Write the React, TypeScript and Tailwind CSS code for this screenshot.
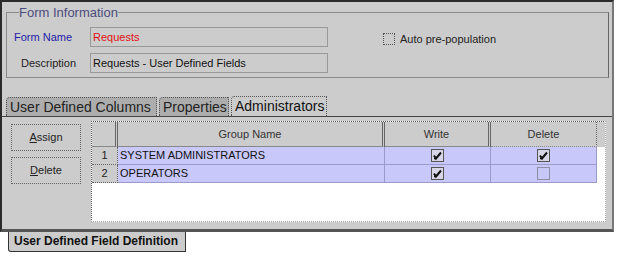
import React from "react";

function Check({ checked }: { checked: boolean }) {
  return (
    <svg width="13" height="13" viewBox="0 0 13 13" className="block">
      <rect x="0.5" y="0.5" width="12" height="12" fill={checked ? "#d6d6e6" : "#c8c8f8"} stroke="#555" strokeDasharray={checked ? "none" : "1 1"} />
      {checked && <path d="M3 6.5 L5 9.5 L10 3.5" fill="none" stroke="#111" strokeWidth="2" />}
      {checked && <path d="M3 9.5 L5 9.5" fill="none" stroke="#111" strokeWidth="1.5" />}
    </svg>
  );
}

function Row({ n, name, write, del }: { n: string; name: string; write: boolean; del: boolean }) {
  return (
    <div className="flex h-[18px]">
      <div className="w-[26px] bg-[#cccccc] border-r border-b border-dotted border-[#666] flex items-center justify-center text-[11px] text-[#222]">{n}</div>
      <div className="w-[267px] bg-[#c8c8fa] border-r border-b border-[#9a9acc] flex items-center pl-[2px] text-[11px] text-[#111]">{name}</div>
      <div className="w-[106px] bg-[#c8c8fa] border-r border-b border-[#9a9acc] flex items-center justify-center"><Check checked={write} /></div>
      <div className="w-[106px] bg-[#c8c8fa] border-r border-b border-[#9a9acc] flex items-center justify-center"><Check checked={del} /></div>
    </div>
  );
}

export default function App() {
  return (
    <div className="w-[617px] h-[257px] bg-white overflow-hidden font-['Liberation_Sans',Arial,sans-serif]">
      <div className="h-[232px] w-[614px] bg-[#cccccc] border-t-2 border-l-2 border-[#2a2a2a] border-r-2 border-r-[#777] border-b-[3px] border-b-[#555] flex flex-col">
        <fieldset className="mt-[3px] ml-[4px] w-[603px] h-[73px] border border-[#8a8a8a] border-r-[#666] pl-[7px] pt-[7px] flex">
          <legend className="ml-[5px] text-[13px] leading-[15px] text-[#4c4c7c]">Form Information</legend>
          <div className="flex flex-col gap-[6px]">
            <div className="flex h-[20px] items-center">
              <div className="w-[76px] text-[11px] text-[#1c1ca8]">Form Name</div>
              <div className="w-[238px] h-[20px] border border-[#999] flex items-center pl-[2px] text-[11px] text-[#e01010]">Requests</div>
            </div>
            <div className="flex h-[20px] items-center">
              <div className="w-[76px] pl-[7px] text-[11px] text-[#222]">Description</div>
              <div className="w-[238px] h-[20px] border border-[#999] flex items-center pl-[2px] text-[11px] text-[#111]">Requests - User Defined Fields</div>
            </div>
          </div>
          <div className="ml-[55px] mt-[6px] flex items-start gap-[5px] h-[14px]">
            <div className="w-[12px] h-[12px] border border-dotted border-[#555]" />
            <div className="text-[11px] leading-[13px] text-[#222]">Auto pre-population</div>
          </div>
        </fieldset>

        <div className="mt-[19px] flex h-[19px] items-end pl-[4px] gap-[2px]">
          <div className="h-[19px] w-[151px] bg-[#adadad] border-t border-l border-r border-dotted border-[#555] rounded-tl-[4px] text-[14px] leading-[18px] pl-[3px] text-[#222]">User Defined Columns</div>
          <div className="h-[19px] w-[70px] bg-[#adadad] border-t border-l border-r border-dotted border-[#555] rounded-tl-[4px] text-[14px] leading-[18px] pl-[3px] text-[#222]">Properties</div>
          <div className="h-[20px] w-[96px] bg-[#cccccc] border-t border-l border-r border-dotted border-[#555] rounded-tl-[3px] text-[14px] leading-[19px] pl-[3px] text-[#111]">Administrators</div>
        </div>

        <div className="flex-1 border-t border-[#444] flex">
          <div className="ml-[9px] pt-[7px] flex flex-col gap-[6px]">
            <div className="w-[70px] h-[27px] border border-dotted border-[#666] flex items-center justify-center text-[11px] text-[#222]"><span><span className="underline">A</span>ssign</span></div>
            <div className="w-[70px] h-[27px] border border-dotted border-[#666] flex items-center justify-center text-[11px] text-[#222]"><span><span className="underline">D</span>elete</span></div>
          </div>
          <div className="ml-[10px] mt-[4px] w-[515px] h-[101px] bg-white border-l border-t border-dotted border-[#555] border-r border-b border-r-[#aaa] border-b-[#aaa] flex flex-col">
            <div className="flex h-[25px] bg-[#cccccc] shrink-0">
              <div className="w-[26px] border-r-[3px] border-double border-[#666] border-b border-b-[#888]" />
              <div className="w-[267px] border-r-[3px] border-double border-[#666] border-b border-b-[#888] flex items-center justify-center text-[11px] text-[#333]">Group Name</div>
              <div className="w-[106px] border-r-[3px] border-double border-[#666] border-b border-b-[#888] flex items-center justify-center text-[11px] text-[#333]">Write</div>
              <div className="w-[106px] border-r border-dotted border-[#666] border-b border-b-[#888] flex items-center justify-center text-[11px] text-[#333]">Delete</div>
            </div>
            <Row n="1" name="SYSTEM ADMINISTRATORS" write={true} del={true} />
            <Row n="2" name="OPERATORS" write={true} del={false} />
          </div>
        </div>
      </div>
      <div className="ml-[8px] w-[178px] h-[20px] bg-[#cccccc] border-l border-r border-b border-[#333] rounded-bl-[3px] pl-[5px] text-[12px] leading-[19px] font-bold text-[#111]">User Defined Field Definition</div>
    </div>
  );
}
